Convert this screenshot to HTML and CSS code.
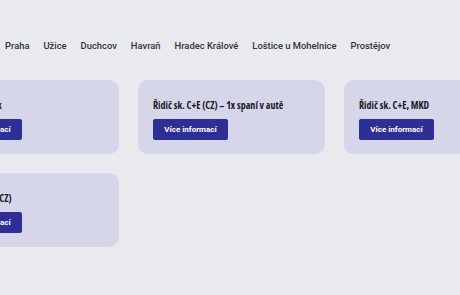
FILE: index.html
```html
<!DOCTYPE html>
<html lang="cs">
<head>
<meta charset="utf-8">
<title>Pozice</title>
<link rel="stylesheet" href="styles.css">
</head>
<body>
<nav class="cities">
  <a class="city" href="#">Praha</a>
  <a class="city" href="#">Užice</a>
  <a class="city" href="#">Duchcov</a>
  <a class="city" href="#">Havraň</a>
  <a class="city" href="#">Hradec Králové</a>
  <a class="city" href="#">Loštice u Mohelnice</a>
  <a class="city" href="#">Prostějov</a>
</nav>
<main class="jobs">
  <div class="card">
    <h3 class="card-title">Řidič-skladník</h3>
    <a class="btn" href="#">Více informací</a>
  </div>
  <div class="card">
    <h3 class="card-title">Řidič sk. C+E (CZ) – 1x spaní v autě</h3>
    <a class="btn" href="#">Více informací</a>
  </div>
  <div class="card">
    <h3 class="card-title">Řidič sk. C+E, MKD</h3>
    <a class="btn" href="#">Více informací</a>
  </div>
  <div class="card">
    <h3 class="card-title">Řidič sk. C+E (CZ)</h3>
    <a class="btn" href="#">Více informací</a>
  </div>
</main>
</body>
</html>
```

FILE: styles.css
```css
html, body {
  margin: 0;
  padding: 0;
  background: #e8eaed;
  overflow: hidden;
}
body {
  width: 460px;
  height: 295px;
  font-family: "Roboto", "Liberation Sans", sans-serif;
}
.cities {
  display: flex;
  gap: 14px;
  padding: 38px 0 0 5px;
  height: 15px;
  align-items: center;
  white-space: nowrap;
}
.city {
  color: #333338;
  text-decoration: none;
  font-size: 9.4px;
  font-weight: 500;
  line-height: 15px;
}
.jobs {
  display: grid;
  grid-template-columns: repeat(3, 187px);
  gap: 19px 19px;
  margin: 27px 0 0 -68px;
  width: 600px;
}
.card {
  background: #d6d6eb;
  border-radius: 10px;
  padding: 18px 15px 14px;
  display: flex;
  flex-direction: column;
  align-items: flex-start;
  height: 42px;
}
.card-title {
  margin: 0 0 7px;
  font-family: "Open Sans", "Roboto", sans-serif;
  font-stretch: 75%;
  font-size: 10px;
  font-weight: 700;
  line-height: 14px;
  color: #1b1b1f;
  white-space: nowrap;
}
.btn {
  display: flex;
  align-items: center;
  justify-content: center;
  width: 75px;
  height: 21px;
  box-sizing: border-box;
  background: #2e2f94;
  border-radius: 2px;
  color: #ffffff;
  text-decoration: none;
  font-family: "Roboto", "Liberation Sans", sans-serif;
  font-size: 8px;
  font-weight: 700;
}
```
